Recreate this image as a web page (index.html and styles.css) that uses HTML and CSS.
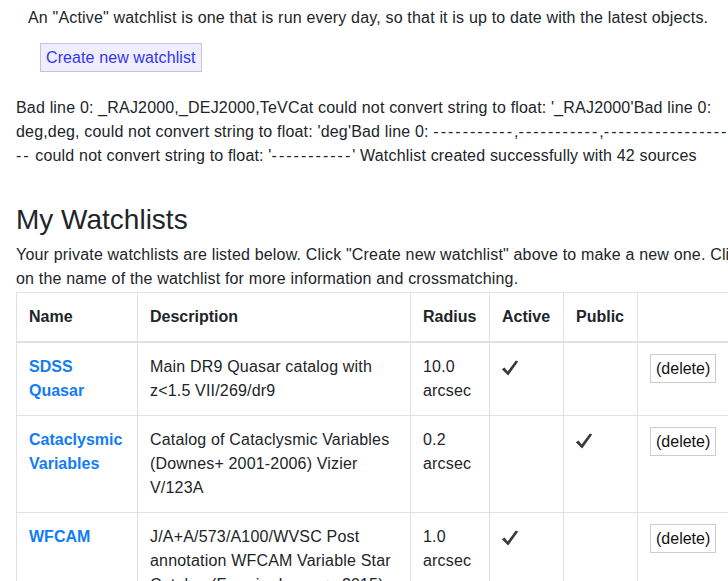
FILE: index.html
```html
<!DOCTYPE html>
<html>
<head>
<meta charset="utf-8">
<link rel="stylesheet" href="styles.css">
</head>
<body>
<div class="page">
  <p class="intro">An "Active" watchlist is one that is run every day, so that it is up to date with the latest objects.</p>
  <button class="create">Create new watchlist</button>
  <p class="message">Bad line 0: _RAJ2000,_DEJ2000,TeVCat could not convert string to float: '_RAJ2000'Bad line 0: deg,deg, could not convert string to float: 'deg'Bad line 0: <span class="dash">-----------</span>,<span class="dash">-----------</span>,<span class="dash">-----------------</span><wbr><span class="dash">--</span> could not convert string to float: '<span class="dash">-----------</span>' Watchlist created successfully with 42 sources</p>
  <h3 class="title">My Watchlists</h3>
  <p class="lead">Your private watchlists are listed below. Click "Create new watchlist" above to make a new one. Click on the name of the watchlist for more information and crossmatching.</p>
  <table class="lists">
    <thead>
      <tr>
        <th class="c-name">Name</th>
        <th class="c-desc">Description</th>
        <th class="c-rad">Radius</th>
        <th class="c-act">Active</th>
        <th class="c-pub">Public</th>
        <th class="c-del"></th>
      </tr>
    </thead>
    <tbody>
      <tr>
        <td><a href="#">SDSS Quasar</a></td>
        <td>Main DR9 Quasar catalog with z&lt;1.5 VII/269/dr9</td>
        <td>10.0 arcsec</td>
        <td><svg class="check" viewBox="0 0 18 16" width="18" height="16"><path d="M0.8 9.2 L3.6 7.6 L6.6 11.6 L14.8 0.6 L17.2 1.6 L7.2 15.6 Z"/></svg></td>
        <td></td>
        <td><button class="del">(delete)</button></td>
      </tr>
      <tr>
        <td><a href="#">Cataclysmic Variables</a></td>
        <td>Catalog of Cataclysmic Variables (Downes+ 2001-2006) Vizier V/123A</td>
        <td>0.2 arcsec</td>
        <td></td>
        <td><svg class="check" viewBox="0 0 18 16" width="18" height="16"><path d="M0.8 9.2 L3.6 7.6 L6.6 11.6 L14.8 0.6 L17.2 1.6 L7.2 15.6 Z"/></svg></td>
        <td><button class="del">(delete)</button></td>
      </tr>
      <tr>
        <td><a href="#">WFCAM</a></td>
        <td>J/A+A/573/A100/WVSC Post annotation WFCAM Variable Star Catalog (Ferreira Lopes+, 2015)</td>
        <td>1.0 arcsec</td>
        <td><svg class="check" viewBox="0 0 18 16" width="18" height="16"><path d="M0.8 9.2 L3.6 7.6 L6.6 11.6 L14.8 0.6 L17.2 1.6 L7.2 15.6 Z"/></svg></td>
        <td></td>
        <td><button class="del">(delete)</button></td>
      </tr>
    </tbody>
  </table>
</div>
</body>
</html>
```
FILE: styles.css
```css
html, body {
  margin: 0;
  padding: 0;
  overflow: hidden;
  background: #fff;
}
body {
  font-family: "Liberation Sans", Arial, sans-serif;
  font-size: 16px;
  line-height: 24px;
  color: #212529;
  letter-spacing: 0.18px;
}
.page {
  width: 740px;
  padding-left: 16px;
}
.intro {
  margin: 6px 0 0 12px;
  white-space: nowrap;
}
.create {
  display: block;
  margin: 13px 0 0 24px;
  height: 29px;
  padding: 0 5px;
  font-family: inherit;
  font-size: 16px;
  letter-spacing: 0.1px;
  color: #3535f0;
  background: #eeeefe;
  border: 1px solid #c4c4d4;
  border-radius: 0;
}
.message {
  margin: 24px 0 0 0;
  width: 723px;
}
.dash {
  letter-spacing: 2px;
  white-space: nowrap;
}
.title {
  margin: 35px 0 0 0;
  font-size: 28px;
  font-weight: 500;
  line-height: 34px;
  letter-spacing: 0;
}
.lead {
  margin: 6px 0 0 0;
}
.lists {
  margin-top: 1px;
  border-collapse: collapse;
  width: 760px;
}
.lists th, .lists td {
  border: 1px solid #dee2e6;
  padding: 12px;
  text-align: left;
  vertical-align: top;
}
.lists th {
  font-weight: bold;
  border-bottom-width: 2px;
  letter-spacing: 0;
}
.c-name { width: 96px; }
.c-desc { width: 248px; }
.c-rad { width: 54px; }
.c-act { width: 49px; }
.c-pub { width: 49px; }
.lists a {
  color: #127cf4;
  font-weight: bold;
  text-decoration: none;
  letter-spacing: 0;
}
.check {
  display: block;
  margin-top: 5px;
  margin-left: -1px;
  fill: #3a3a3a;
}
.del {
  font-family: inherit;
  font-size: 16px;
  color: #111;
  background: #fff;
  border: 1px solid #ccc;
  border-radius: 0;
  height: 29px;
  padding: 0 5px;
  margin-top: -1px;
}
```
